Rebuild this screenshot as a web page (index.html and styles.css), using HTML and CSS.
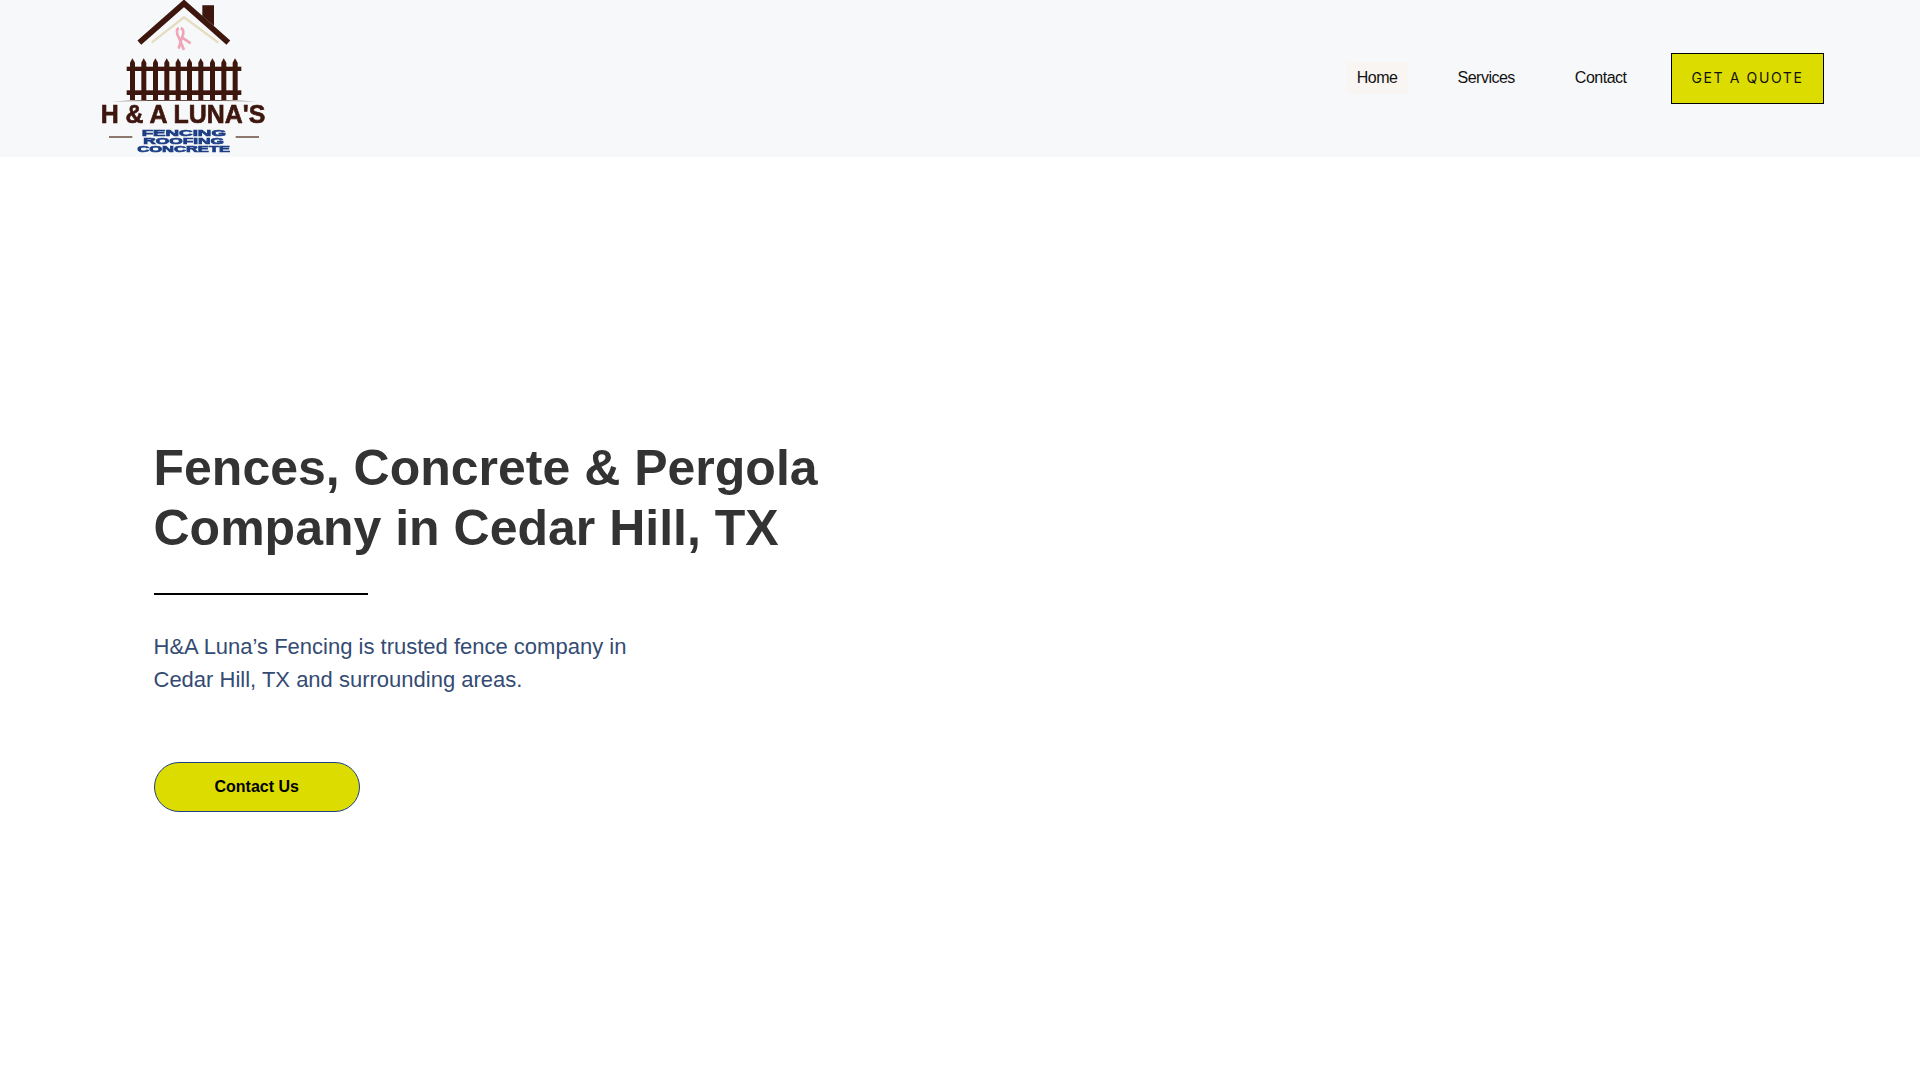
FILE: index.html
```html
<!DOCTYPE html>
<html lang="en">
<head>
<meta charset="utf-8">
<title>H&amp;A Luna's Fencing</title>
<link rel="stylesheet" href="styles.css">
</head>
<body>
<header class="site-header">
  <a class="logo" href="#" aria-label="H&amp;A Luna's">
    <svg class="logo-svg" viewBox="0 0 660 468" width="220" height="156">
      <defs><filter id="soft"><feGaussianBlur stdDeviation="1.6"/></filter></defs>
      <g filter="url(#soft)">
        <path d="M215 128 L312 52 L415 128" fill="none" stroke="#e6dcc0" stroke-width="7"/>
        <path d="M178 128 L312 10 L445 128" fill="none" stroke="#3d150c" stroke-width="17"/>
        <path d="M367 16 H402 V78 L367 48 Z" fill="#3d150c"/>
        <path d="M296 84 C286 90 290 102 298 116 L312 150 M302 84 C312 88 312 100 306 112 L296 146 M306 112 L332 130" fill="none" stroke="#efa6b8" stroke-width="8"/>
        <g fill="#3d150c">
          <path d="M150 300 V188 L157 175 L165 188 V300 Z"/>
          <path d="M184 300 V188 L191 175 L199 188 V300 Z"/>
          <path d="M219 300 V188 L226 175 L234 188 V300 Z"/>
          <path d="M253 300 V188 L260 175 L268 188 V300 Z"/>
          <path d="M287 300 V188 L294 175 L302 188 V300 Z"/>
          <path d="M321 300 V188 L328 175 L336 188 V300 Z"/>
          <path d="M355 300 V188 L362 175 L370 188 V300 Z"/>
          <path d="M390 300 V188 L397 175 L405 188 V300 Z"/>
          <path d="M424 300 V188 L431 175 L439 188 V300 Z"/>
          <path d="M458 300 V188 L465 175 L473 188 V300 Z"/>
          <rect x="140" y="200" width="344" height="13"/>
          <rect x="140" y="271" width="344" height="14"/>
          <path d="M95 304 Q310 296 530 304 Q310 301 95 304 Z"/>
        </g>
        <rect x="87" y="409" width="70" height="4" fill="#5a3a2c"/>
        <rect x="467" y="409" width="70" height="4" fill="#5a3a2c"/>
      </g>
      <g class="logo-text">
        <text class="logo-name" x="62" y="369" textLength="494" lengthAdjust="spacingAndGlyphs">H &amp; A LUNA'S</text>
        <text class="logo-sub" x="185" y="407" textLength="253" lengthAdjust="spacingAndGlyphs">FENCING</text>
        <text class="logo-sub" x="190" y="432" textLength="242" lengthAdjust="spacingAndGlyphs">ROOFING</text>
        <text class="logo-sub" x="172" y="457" textLength="278" lengthAdjust="spacingAndGlyphs">CONCRETE</text>
      </g>
    </svg>
  </a>
  <nav class="main-nav">
    <a class="nav-link is-active" href="#">Home</a>
    <a class="nav-link" href="#">Services</a>
    <a class="nav-link" href="#">Contact</a>
    <a class="quote-btn" href="#">GET A QUOTE</a>
  </nav>
</header>
<main class="hero">
  <h1 class="hero-title">Fences, Concrete &amp; Pergola<br>Company in Cedar Hill, TX</h1>
  <div class="hero-rule"></div>
  <p class="hero-text">H&amp;A Luna’s Fencing is trusted fence company in<br>Cedar Hill, TX and surrounding areas.</p>
  <a class="hero-btn" href="#">Contact Us</a>
</main>
</body>
</html>
```
FILE: styles.css
```css
* { box-sizing: border-box; }
html, body { margin: 0; padding: 0; }
body {
  width: 1920px;
  height: 1080px;
  overflow: hidden;
  background: #fff;
  font-family: "Liberation Sans", Arial, sans-serif;
}
a { text-decoration: none; color: inherit; }

.site-header {
  height: 157px;
  background: #f7f8fa;
  display: flex;
  align-items: center;
  justify-content: space-between;
  padding: 0 96px 0 80px;
}
.logo { display: block; align-self: flex-start; height: 156px; }
.logo-svg { display: block; }
.logo-text { filter: url(#soft); }
.logo-name { font: 700 80px "Liberation Sans", sans-serif; fill: #3d150c; stroke: #3d150c; stroke-width: 2px; }
.logo-sub { font: 700 28px "Liberation Sans", sans-serif; fill: #1c3f86; stroke: #1c3f86; stroke-width: 2px; }

.main-nav { display: flex; align-items: center; }
.nav-link {
  font-size: 16px;
  letter-spacing: -0.5px;
  line-height: 32px;
  padding: 0 10px;
  color: #111;
  margin: 0 40px 1px 0;
}
.nav-link.is-active { background: #f9f5f2; }
.nav-link:nth-child(3) { margin-right: 34.5px; }
.quote-btn {
  display: block;
  width: 153px;
  height: 51px;
  line-height: 48px;
  text-align: center;
  background: #dcdc00;
  border: 1px solid #000;
  color: #111;
  font-family: Inter, "Liberation Sans", sans-serif;
  font-size: 14px;
  letter-spacing: 1.6px;
}

.hero { padding: 281px 0 0 153.5px; }
.hero-title {
  margin: 0;
  font-size: 50px;
  line-height: 60px;
  font-weight: 700;
  color: #333;
}
.hero-rule {
  width: 214.5px;
  height: 2px;
  margin-top: 35px;
  background: #000;
}
.hero-text {
  margin: 35px 0 0;
  font-size: 22px;
  line-height: 33px;
  color: #344b73;
}
.hero-btn {
  display: block;
  width: 206.5px;
  height: 50px;
  margin-top: 66px;
  border: 1px solid #1f3f8a;
  border-radius: 25px;
  background: #dcdc00;
  color: #000;
  font-size: 16px;
  font-weight: 700;
  line-height: 48px;
  text-align: center;
}
```
